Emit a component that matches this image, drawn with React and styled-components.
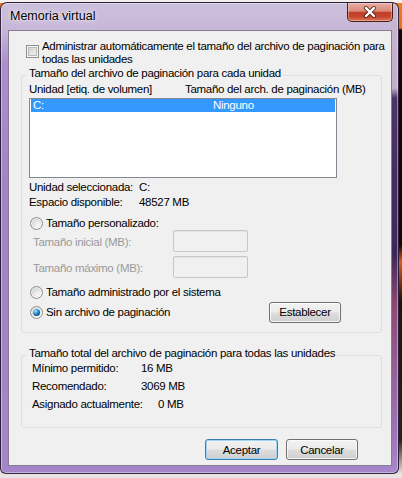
import React from 'react';
import styled, { createGlobalStyle } from 'styled-components';

const Global = createGlobalStyle`
  html, body { margin: 0; padding: 0; }
  body {
    width: 402px; height: 478px; overflow: hidden;
    background: linear-gradient(to bottom, #f4f0ee 0, #f4f0ee 3px, #f07a22 3px, #e8701c 28px, #0b0b0b 30px, #0b0b0b 245px, #d4601a 262px, #1a1414 300px, #2a2020 440px, #e8e4e4 474px);
    font-family: "Liberation Sans", Arial, sans-serif;
    font-size: 11.5px;
    letter-spacing: -0.3px;
    white-space: nowrap;
    color: #000;
  }
  #root { height: 100%; }
  * { box-sizing: border-box; }
`;

const Page = styled.div`
  display: flex;
  align-items: flex-start;
  padding-top: 2px;
  height: 478px;
`;

const Window = styled.div`
  width: 399px;
  height: 472px;
  display: flex;
  flex-direction: column;
  border: 1px solid rgba(25, 12, 35, 0.85);
  border-radius: 7px 7px 6px 6px;
  background:
    linear-gradient(to bottom, #cbb6cf 0, #c3adc8 85px, #4e3369 95px, #3e2758 250px, #8c4872 300px, #9f78be 440px, #a98acb 100%) right top / 7px 100% no-repeat,
    linear-gradient(to bottom, #cdc0dc 0, #c6b7d8 27px, #ab8fcc 60px, #a183c6 200px, #a485c9 100%);
  box-shadow: inset 0 0 0 1px rgba(255, 255, 255, 0.4);
  overflow: hidden;
`;

const TitleBar = styled.div`
  height: 27px;
  display: flex;
  align-items: flex-start;
  flex-shrink: 0;
`;

const Title = styled.div`
  margin: 6px 0 0 9px;
  font-size: 12.5px;
  letter-spacing: 0;
  line-height: 14px;
  color: #000;
  text-shadow: 0 0 6px rgba(255, 255, 255, 0.9), 0 0 2px rgba(255, 255, 255, 0.8);
`;

const CloseButton = styled.div`
  margin-left: auto;
  margin-right: 5px;
  width: 46px;
  height: 19px;
  display: flex;
  align-items: center;
  justify-content: center;
  border: 1px solid #4a1d18;
  border-top: none;
  border-radius: 0 0 5px 5px;
  background: linear-gradient(to bottom, #e8ada1 0%, #d98b7b 45%, #c33f2a 52%, #c44530 75%, #dc7452 100%);
  box-shadow: inset 0 0 0 1px rgba(255, 255, 255, 0.35);
`;

const Client = styled.div`
  flex: 1;
  margin: 0 6px 7px 7px;
  background: #f0f0f0;
  border: 1px solid rgba(50, 30, 70, 0.55);
  display: flex;
  flex-direction: column;
`;

const CheckRow = styled.div`
  display: flex;
  align-items: flex-start;
  margin: 9px 0 0 17px;
  gap: 3px;
`;

const Checkbox = styled.span`
  width: 13px;
  height: 13px;
  margin-top: 5px;
  flex-shrink: 0;
  border: 1px solid #8e8f8f;
  background: linear-gradient(135deg, #cbcbcb 0%, #e2e2e2 50%, #f6f6f6 100%);
  box-shadow: inset 0 0 0 1px #f7f7f7, inset 0 0 0 2px #b9b9b9;
`;

const CheckLabel = styled.div`
  line-height: 13px;
`;

const Group = styled.fieldset`
  margin: ${p => p.$top}px 9px 0 12px;
  padding: 0 7px ${p => p.$bottom}px 7px;
  border: 1px solid #d5dfe5;
  border-radius: 3px;
  min-width: 0;
`;

const Legend = styled.legend`
  margin-left: -2px;
  padding: 0 2px 4px 2px;
  line-height: 14px;
`;

const ColumnHeads = styled.div`
  display: grid;
  grid-template-columns: 156px auto;
  margin-top: -2px;
  line-height: 14px;
`;

const ListBox = styled.div`
  margin-top: 2px;
  width: 308px;
  height: 80px;
  border: 1px solid #828790;
  background: #fff;
  padding: 0 1px;
`;

const ListRow = styled.div`
  display: grid;
  grid-template-columns: 180px auto;
  height: 13px;
  line-height: 13px;
  padding-left: 2px;
  background: ${p => (p.$selected ? '#3399ff' : 'transparent')};
  color: ${p => (p.$selected ? '#fff' : '#000')};
`;

const InfoGrid = styled.div`
  display: grid;
  grid-template-columns: 110px auto;
  row-gap: 1px;
  margin-top: 2px;
  line-height: 14px;
`;

const RadioRow = styled.div`
  display: flex;
  align-items: center;
  gap: 3px;
  margin-top: ${p => p.$top}px;
  height: ${p => p.$h}px;
  line-height: 14px;
`;

const Radio = styled.span`
  width: 13px;
  height: 13px;
  margin-left: 1px;
  flex-shrink: 0;
  border-radius: 50%;
  border: 1px solid #8e8f8f;
  background: radial-gradient(circle at 65% 70%, #f8f8f8 0%, #e4e4e4 45%, #c4c4c4 100%);
  box-shadow: inset 0 0 0 1px rgba(255, 255, 255, 0.6);
  display: flex;
  align-items: center;
  justify-content: center;
  &::after {
    content: '';
    display: ${p => (p.$checked ? 'block' : 'none')};
    width: 7px;
    height: 7px;
    border-radius: 50%;
    background: radial-gradient(circle at 35% 30%, #b4e6ff 0%, #3a9ee0 35%, #0d5796 70%, #08355f 100%);
  }
`;

const FieldRow = styled.div`
  display: grid;
  grid-template-columns: 144px 75px;
  align-items: center;
  margin-top: ${p => p.$top}px;
  height: 22px;
  line-height: 14px;
`;

const FieldLabel = styled.span`
  padding: 2px 0 0 4px;
  color: #9a9a9a;
`;

const DisabledInput = styled.span`
  height: ${p => p.$h}px;
  border: 1px solid #c7c7c7;
  border-radius: 2px;
  background: #f0f0f0;
  box-shadow: inset 0 1px 0 #e4e4e4;
`;

const Button = styled.button`
  width: ${p => p.$w}px;
  height: 21px;
  padding: 0;
  font: inherit;
  letter-spacing: inherit;
  color: #000;
  line-height: 14px;
  border: 1px solid ${p => (p.$default ? '#3c7fb1' : '#707070')};
  border-radius: 3px;
  background: linear-gradient(to bottom, #f2f2f2 0%, #ebebeb 48%, #dddddd 52%, #cfcfcf 100%);
  box-shadow: inset 0 0 0 1px ${p => (p.$default ? '#9ed6f6' : 'rgba(255,255,255,0.75)')};
`;

const SetButton = styled(Button)`
  margin-left: auto;
  margin-right: 33px;
`;

const TotalRow = styled.div`
  display: flex;
  line-height: 18px;
  padding-left: 3px;
  margin-top: ${p => p.$top || 0}px;
`;

const TotalLabel = styled.span`
  width: 109px;
  flex-shrink: 0;
`;

const TotalValue = styled.span`
  padding-left: ${p => p.$indent || 0}px;
`;

const ButtonRow = styled.div`
  display: flex;
  justify-content: flex-end;
  gap: 8px;
  margin-top: 11px;
  padding-right: 33px;
`;

function CloseGlyph() {
  return (
    <svg width="14" height="12" viewBox="0 0 14 12">
      <path d="M3 2 L11 10 M11 2 L3 10" stroke="#3a1410" strokeWidth="4.2" strokeLinecap="round" fill="none" opacity="0.7" />
      <path d="M3 2 L11 10 M11 2 L3 10" stroke="#fff" strokeWidth="2.4" strokeLinecap="round" fill="none" />
    </svg>
  );
}

export default function App() {
  return (
    <>
      <Global />
      <Page>
        <Window>
          <TitleBar>
            <Title>Memoria virtual</Title>
            <CloseButton><CloseGlyph /></CloseButton>
          </TitleBar>
          <Client>
            <CheckRow>
              <Checkbox />
              <CheckLabel>
                Administrar automáticamente el tamaño del archivo de paginación para<br />
                todas las unidades
              </CheckLabel>
            </CheckRow>

            <Group $top={0} $bottom={9}>
              <Legend>Tamaño del archivo de paginación para cada unidad</Legend>
              <ColumnHeads>
                <span>Unidad [etiq. de volumen]</span>
                <span>Tamaño del arch. de paginación (MB)</span>
              </ColumnHeads>
              <ListBox>
                <ListRow $selected>
                  <span>C:</span>
                  <span>Ninguno</span>
                </ListRow>
              </ListBox>
              <InfoGrid>
                <span>Unidad seleccionada:</span>
                <span>C:</span>
                <span>Espacio disponible:</span>
                <span>48527 MB</span>
              </InfoGrid>
              <RadioRow $top={7} $h={14}>
                <Radio />
                <span>Tamaño personalizado:</span>
              </RadioRow>
              <FieldRow $top={0}>
                <FieldLabel>Tamaño inicial (MB):</FieldLabel>
                <DisabledInput $h={22} />
              </FieldRow>
              <FieldRow $top={4}>
                <FieldLabel>Tamaño máximo (MB):</FieldLabel>
                <DisabledInput $h={22} />
              </FieldRow>
              <RadioRow $top={7} $h={14}>
                <Radio />
                <span>Tamaño administrado por el sistema</span>
              </RadioRow>
              <RadioRow $top={2} $h={22}>
                <Radio $checked />
                <span>Sin archivo de paginación</span>
                <SetButton $w={72}>Establecer</SetButton>
              </RadioRow>
            </Group>

            <Group $top={13} $bottom={14}>
              <Legend>Tamaño total del archivo de paginación para todas las unidades</Legend>
              <TotalRow $top={-5}>
                <TotalLabel>Mínimo permitido:</TotalLabel>
                <TotalValue>16 MB</TotalValue>
              </TotalRow>
              <TotalRow>
                <TotalLabel>Recomendado:</TotalLabel>
                <TotalValue>3069 MB</TotalValue>
              </TotalRow>
              <TotalRow>
                <TotalLabel>Asignado actualmente:</TotalLabel>
                <TotalValue $indent={17}>0 MB</TotalValue>
              </TotalRow>
            </Group>

            <ButtonRow>
              <Button $w={73} $default>Aceptar</Button>
              <Button $w={72}>Cancelar</Button>
            </ButtonRow>
          </Client>
        </Window>
      </Page>
    </>
  );
}
